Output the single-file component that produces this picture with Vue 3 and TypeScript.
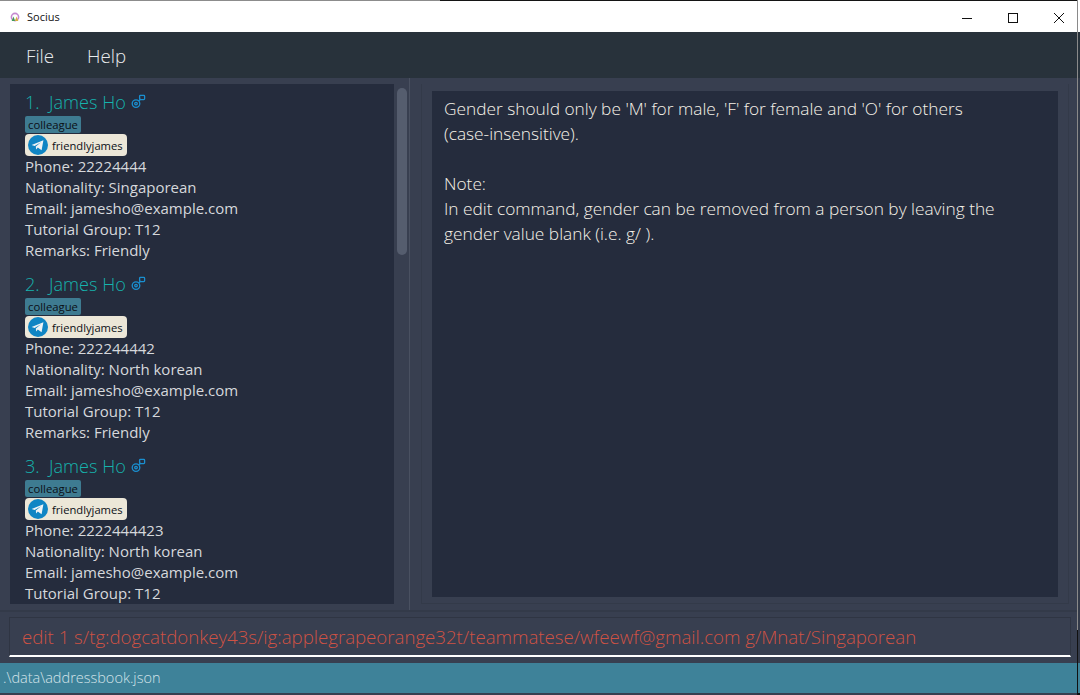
<script setup lang="ts">
interface Person { phone: string; nat: string; remarks: boolean }
const people: Person[] = [
  { phone: '22224444', nat: 'Singaporean', remarks: true },
  { phone: '222244442', nat: 'North korean', remarks: true },
  { phone: '2222444423', nat: 'North korean', remarks: true },
]
</script>

<template>
  <div class="screen">
    <div class="window">
      <div class="topline"></div>
      <header class="titlebar">
        <div class="title-left">
          <svg class="app-icon" width="10" height="10" viewBox="0 0 10 10">
            <circle cx="5" cy="5" r="3.6" fill="none" stroke="#c58ad0" stroke-width="1.6" />
            <path d="M1.6 9 L3.6 4.4 L5 9Z" fill="#3f9a5a" />
            <path d="M5 9 L6.4 4.4 L8.4 9Z" fill="#d8b040" />
          </svg>
          <span class="app-name">Socius</span>
        </div>
        <div class="controls">
          <svg width="46" height="30" viewBox="0 0 46 30"><path d="M18 16.5H28" stroke="#111" stroke-width="1" /></svg>
          <svg width="46" height="30" viewBox="0 0 46 30"><rect x="18.5" y="11.5" width="9" height="9" fill="none" stroke="#111" stroke-width="1" /></svg>
          <svg width="41" height="30" viewBox="0 0 41 30"><path d="M18 11L28 21M28 11L18 21" stroke="#111" stroke-width="1" /></svg>
        </div>
      </header>

      <nav class="menubar">
        <span class="menu-item">File</span>
        <span class="menu-item">Help</span>
      </nav>

      <main class="main">
        <section class="list-pane">
          <div class="list">
            <article v-for="(p, i) in people" :key="i" class="card">
              <div class="name-row">
                <span class="name">{{ i + 1 }}.&nbsp; James Ho</span>
                <svg class="gender" width="15" height="15" viewBox="0 0 15 15" fill="none" stroke="#1a8fd0" stroke-width="1.3">
                  <circle cx="5" cy="9.6" r="3.8" />
                  <circle cx="5" cy="9.6" r="1.3" />
                  <rect x="8.6" y="1.4" width="5" height="4.2" rx="0.8" />
                  <path d="M7.6 7L9.8 5" />
                </svg>
              </div>
              <div class="tag-row"><span class="tag">colleague</span></div>
              <div class="social">
                <svg width="20" height="20" viewBox="0 0 20 20">
                  <circle cx="10" cy="10" r="10" fill="#0f85c4" />
                  <path d="M3.6 10L15.4 5.2L13.6 15.2L9.8 12.5L8.2 14.6L7.8 11.6L13 7.2L6.6 11Z" fill="#eef3f5" />
                </svg>
                <span>friendlyjames</span>
              </div>
              <div class="line">Phone: {{ p.phone }}</div>
              <div class="line">Nationality: {{ p.nat }}</div>
              <div class="line">Email: jamesho@example.com</div>
              <div class="line">Tutorial Group: T12</div>
              <div class="line">Remarks: Friendly</div>
            </article>
          </div>
          <div class="scroll-track"><div class="scroll-thumb"></div></div>
        </section>
        <div class="divider"></div>
        <section class="detail-pane">
          <div class="detail">
            <p>Gender should only be 'M' for male, 'F' for female and 'O' for others<br />(case-insensitive).</p>
            <p class="note">Note:<br />In edit command, gender can be removed from a person by leaving the<br />gender value blank (i.e. g/ ).</p>
          </div>
        </section>
      </main>

      <section class="command">
        <div class="command-box">edit 1 s/tg:dogcatdonkey43s/ig:applegrapeorange32t/teammatese/wfeewf@gmail.com g/Mnat/Singaporean</div>
      </section>

      <footer class="status">.\data\addressbook.json</footer>
    </div>
    <div class="edge"></div>
    <div class="behind">
      <div class="b-a"></div>
      <div class="b-b"></div>
      <div class="b-c"></div>
      <div class="b-d"></div>
    </div>
  </div>
</template>

<style>
html, body { margin: 0; background: #111; overflow: hidden; }
</style>

<style scoped>
.screen { display: flex; width: 1080px; height: 695px; }
.window {
  width: 1077px;
  height: 695px;
  box-sizing: border-box;
  padding: 0 0 2px;
  display: flex;
  flex-direction: column;
  background: #383f50;
  font-family: "Open Sans", "Liberation Sans", sans-serif;
  flex: none;
}
.topline { height: 1px; flex: none; background: linear-gradient(90deg, #8c8c8c 440px, #141414 440px); }
.edge { width: 1px; flex: none; background: linear-gradient(#8a8a8a 630px, #111 630px); }
.behind { width: 2px; flex: none; display: flex; flex-direction: column; }
.b-a { height: 32px; background: #fff; }
.b-b { height: 46px; background: #28323b; }
.b-c { height: 585px; background: #333a49; }
.b-d { height: 30px; background: #3e8299; }
.titlebar {
  height: 31px;
  flex: none;
  background: #fff;
  display: flex;
  justify-content: space-between;
  align-items: center;
  color: #111;
}
.title-left { display: flex; align-items: center; padding-left: 10px; gap: 7px; font-size: 11px; }
.controls { display: flex; }
.controls svg { display: block; }
.menubar {
  height: 46px;
  flex: none;
  background: #28323b;
  display: flex;
  align-items: center;
  gap: 33px;
  padding-left: 26px;
  font-size: 18.7px;
  font-weight: 300;
  color: #e8ebed;
}
.main {
  flex: 1;
  min-height: 0;
  display: flex;
  padding: 6px 0 6px 10px;
  border-bottom: 2px solid #333a49;
}
.list-pane { width: 398px; display: flex; flex: none; }
.list {
  width: 384px;
  background: #252c3d;
  overflow: hidden;
  padding: 7px 0 0 15px;
  box-sizing: border-box;
}
.card { height: 182px; }
.name-row { display: flex; align-items: center; gap: 5px; height: 21px; }
.name { font-size: 18.1px; color: #16b3ad; font-weight: 300; }
.tag-row { display: flex; margin-top: 4px; }
.tag {
  height: 17px;
  line-height: 17px;
  padding: 0 3px;
  background: #3e7b91;
  color: #0b0f16;
  font-size: 11.3px;
  font-weight: 500;
  border-radius: 2px;
}
.social {
  display: flex;
  width: fit-content;
  align-items: center;
  gap: 4px;
  height: 22px;
  margin-top: 1px;
  padding: 0 4px 0 3px;
  background: #ece7d8;
  border-radius: 4px;
  color: #0b0f16;
  font-size: 11.2px;
  font-weight: 500;
  box-sizing: border-box;
}
.line { font-size: 15px; line-height: 21px; color: #d6d8dc; font-weight: 400; white-space: nowrap; }
.scroll-track { width: 14px; padding: 4px 0 0 3px; box-sizing: border-box; }
.scroll-thumb { width: 10px; height: 167px; border-radius: 5px; background: #555d6e; }
.divider { width: 1px; background: #4a5161; margin: -6px 11px -6px 1px; flex: none; }
.detail-pane {
  flex: 1;
  margin-right: 8px;
  padding: 7px 10px 6px 10px;
  border: 1px solid #333a49;
  border-top: 0;
  box-sizing: border-box;
}
.detail {
  height: 100%;
  background: #252c3d;
  padding: 5px 12px;
  box-sizing: border-box;
  color: #f6f2e8;
  font-size: 17.3px;
  font-weight: 300;
  line-height: 25.1px;
  white-space: nowrap;
}
.detail p { margin: 0 0 25.1px; }
.command {
  height: 51px;
  flex: none;
  padding: 5px 6px 6px 9px;
  box-sizing: border-box;
}
.command-box {
  height: 100%;
  box-sizing: border-box;
  border: 1px solid #2f3543;
  border-bottom: 2px solid #fff;
  padding-left: 12px;
  color: #cf5244;
  font-size: 18.65px;
  font-weight: 300;
  line-height: 38px;
  white-space: nowrap;
  overflow: hidden;
}
.status {
  height: 30px;
  flex: none;
  background: #3e8299;
  color: #d4e4ea;
  font-size: 14.5px;
  font-weight: 300;
  line-height: 30px;
  padding-left: 3px;
}
</style>
